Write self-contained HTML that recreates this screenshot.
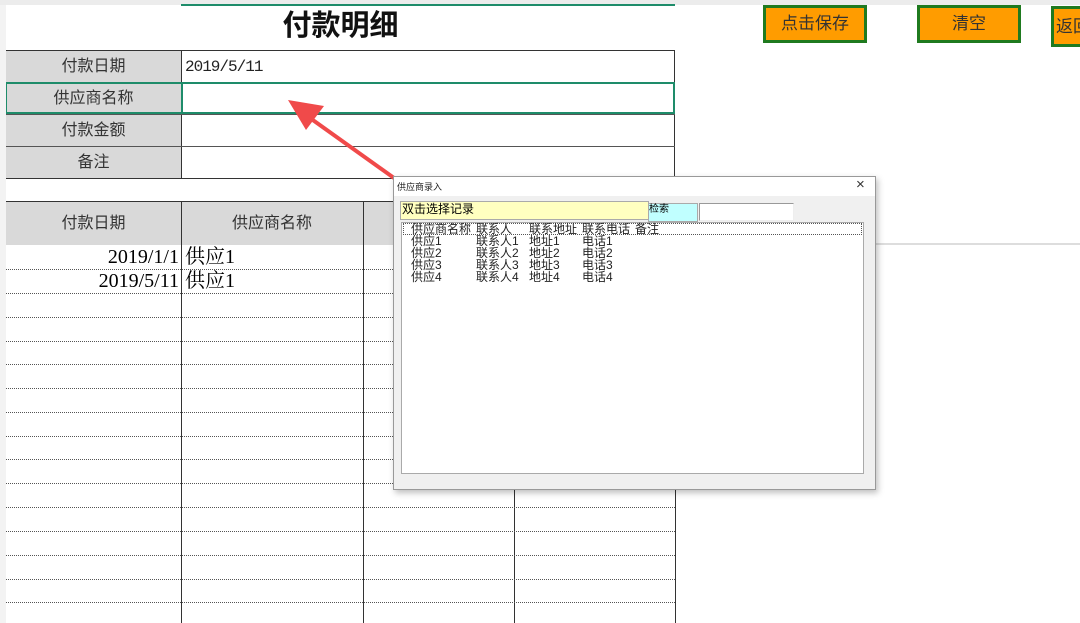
<!DOCTYPE html>
<html><head><meta charset="utf-8"><style>
body{margin:0;width:1080px;height:623px;overflow:hidden;background:#fff;position:relative;font-family:"Liberation Serif","Noto Serif CJK SC",serif;}
.a{position:absolute;box-sizing:border-box}
.lab{background:#d9d9d9;color:#333;font-size:16px;text-align:center;font-family:"Liberation Sans","Noto Sans CJK SC",sans-serif}
.hl{position:absolute;left:6px;width:669px;height:0;border-top:1px dotted #555}
.vl{position:absolute;width:1px;background:#333}
.btn{position:absolute;background:#ff9c00;border:3px solid #1f7a1f;font-size:17px;color:#333;text-align:center;font-family:"Liberation Sans","Noto Sans CJK SC",sans-serif;box-sizing:border-box;white-space:nowrap;overflow:hidden}
.dl{position:absolute;font-family:"Liberation Sans","Noto Sans CJK SC",sans-serif;font-size:12px;line-height:12px;color:#222;white-space:pre}
</style></head><body>
<div class="a" style="left:0;top:0;width:1080px;height:5px;background:#ececec"></div>
<div class="a" style="left:181px;top:4px;width:494px;height:2px;background:#1e8c6a"></div>
<div class="a" style="left:0;top:5px;width:6px;height:618px;background:#f3f3f3"></div>
<div class="a" style="left:6px;top:6px;width:669px;height:40px;text-align:center;font-size:29px;line-height:40px;font-family:'Liberation Sans','Noto Sans CJK SC',sans-serif;font-weight:bold;color:#111">付款明细</div>
<div class="a" style="left:6px;top:50px;width:669px;height:129px;border:1px solid #333;border-left:none"></div>
<div class="a lab" style="left:6px;top:51px;width:175px;height:31px;line-height:31px">付款日期</div>
<div class="a lab" style="left:6px;top:83px;width:175px;height:31px;line-height:31px">供应商名称</div>
<div class="a lab" style="left:6px;top:115px;width:175px;height:31px;line-height:31px">付款金额</div>
<div class="a lab" style="left:6px;top:147px;width:175px;height:31px;line-height:31px">备注</div>
<div class="a" style="left:181px;top:50px;width:1px;height:129px;background:#333"></div>
<div class="a" style="left:6px;top:114px;width:669px;height:1px;background:#555"></div>
<div class="a" style="left:6px;top:146px;width:669px;height:1px;background:#555"></div>
<div class="a" style="left:6px;top:82px;width:669px;height:32px;border:2px solid #1e8c6a;border-left-width:1px"></div>
<div class="a" style="left:181px;top:82px;width:494px;height:32px;border:2px solid #1e8c6a"></div>
<div class="a" style="left:185px;top:58px;font-size:16px;color:#222;font-family:'Liberation Mono',monospace;letter-spacing:-1px">2019/5/11</div>
<svg class="a" style="left:280px;top:90px" width="140" height="100"><line x1="114" y1="88" x2="30" y2="28" stroke="#f04a4a" stroke-width="4"/><polygon points="8,10 44,16 26,40" fill="#f04a4a"/></svg>
<div class="a" style="left:6px;top:201px;width:669px;height:44px;background:#d9d9d9;border-top:1px solid #333"></div>
<div class="a lab" style="left:6px;top:202px;width:175px;height:43px;line-height:43px">付款日期</div>
<div class="a lab" style="left:181px;top:202px;width:182px;height:43px;line-height:43px">供应商名称</div>
<div class="vl" style="left:181px;top:201px;height:422px"></div>
<div class="vl" style="left:363px;top:201px;height:422px"></div>
<div class="vl" style="left:514px;top:201px;height:422px"></div>
<div class="vl" style="left:675px;top:201px;height:422px"></div>
<div class="a" style="left:675px;top:243px;width:405px;height:2px;background:#ddd"></div>
<div class="hl" style="top:269px"></div><div class="hl" style="top:293px"></div><div class="hl" style="top:317px"></div><div class="hl" style="top:341px"></div><div class="hl" style="top:364px"></div><div class="hl" style="top:388px"></div><div class="hl" style="top:412px"></div><div class="hl" style="top:436px"></div><div class="hl" style="top:459px"></div><div class="hl" style="top:483px"></div><div class="hl" style="top:507px"></div><div class="hl" style="top:531px"></div><div class="hl" style="top:555px"></div><div class="hl" style="top:579px"></div><div class="hl" style="top:602px"></div>
<div class="a" style="left:6px;top:246px;width:173px;text-align:right;font-size:20px;line-height:23px">2019/1/1</div>
<div class="a" style="left:185px;top:246px;font-size:20px;line-height:23px">供应1</div>
<div class="a" style="left:6px;top:270px;width:173px;text-align:right;font-size:20px;line-height:23px">2019/5/11</div>
<div class="a" style="left:185px;top:270px;font-size:20px;line-height:23px">供应1</div>
<div class="btn" style="left:763px;top:5px;width:104px;height:38px;line-height:32px">点击保存</div>
<div class="btn" style="left:917px;top:5px;width:104px;height:38px;line-height:32px">清空</div>
<div class="btn" style="left:1051px;top:6px;width:40px;height:41px;line-height:36px;text-align:left;padding-left:2px">返回</div>
<div class="a" style="left:393px;top:176px;width:483px;height:314px;background:#f0f0f0;border:1px solid #999;box-shadow:2px 3px 6px rgba(0,0,0,.25)"></div>
<div class="a" style="left:394px;top:177px;width:481px;height:19px;background:#fff"></div>
<div class="a" style="left:397px;top:180px;font-size:9px;font-family:'Liberation Sans','Noto Sans CJK SC',sans-serif;color:#222">供应商录入</div>
<div class="a" style="left:856px;top:176px;font-size:15px;font-family:'Liberation Sans',sans-serif;color:#333">×</div>
<div class="a" style="left:400px;top:201px;width:249px;height:19px;background:#ffffc0;border:1px solid #aaa;font-size:12px;line-height:14px;font-family:'Liberation Sans','Noto Sans CJK SC',sans-serif;padding-left:1px">双击选择记录</div>
<div class="a" style="left:648px;top:203px;width:50px;height:19px;background:#c0ffff;border:1px solid #aaa;font-size:10px;line-height:11px;font-family:'Liberation Sans','Noto Sans CJK SC',sans-serif">检索</div>
<div class="a" style="left:699px;top:203px;width:95px;height:18px;background:#fff;border:1px solid #999;border-right-color:#eee;border-bottom-color:#eee"></div>
<div class="a" style="left:401px;top:222px;width:463px;height:252px;background:#fff;border:1px solid #aaa"></div>
<div class="a" style="left:403px;top:223px;width:459px;height:12px;border:1px dotted #555"></div>
<div class="dl" style="left:411px;top:223px">供应商名称
供应1
供应2
供应3
供应4</div>
<div class="dl" style="left:476px;top:223px">联系人
联系人1
联系人2
联系人3
联系人4</div>
<div class="dl" style="left:529px;top:223px">联系地址
地址1
地址2
地址3
地址4</div>
<div class="dl" style="left:582px;top:223px">联系电话
电话1
电话2
电话3
电话4</div>
<div class="dl" style="left:635px;top:223px">备注</div>
</body></html>
